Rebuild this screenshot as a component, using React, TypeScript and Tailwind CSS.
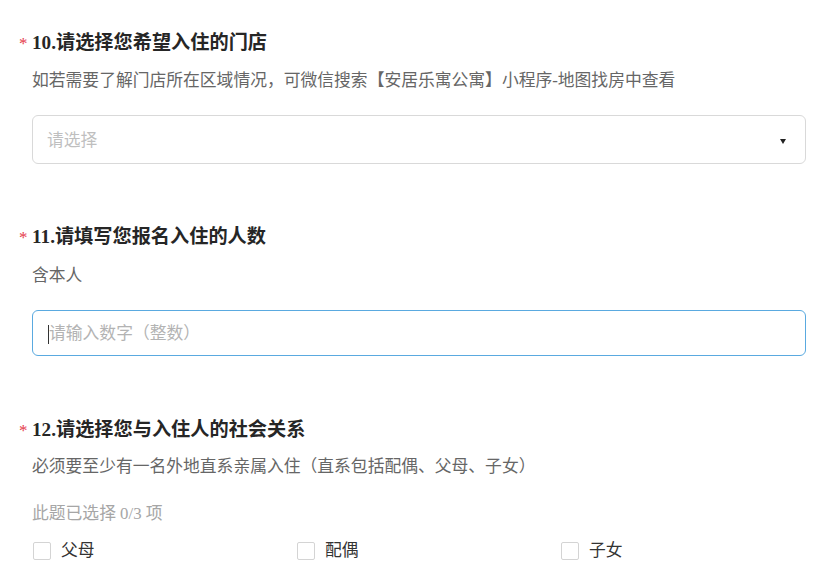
const FONT = { fontFamily: '"Liberation Serif", "Noto Sans CJK SC", serif' };

function Title({ text }: { text: string }) {
  return (
    <div className="flex items-center h-[26px] -ml-[13px]">
      <span className="w-[13px] text-[#e5394a] text-[17px] leading-none">*</span>
      <span className="text-[19.2px] font-bold text-[#262626] leading-[26px]">{text}</span>
    </div>
  );
}

function Desc({ text }: { text: string }) {
  return <p className="text-[16.8px] leading-[24px] text-[#666666]">{text}</p>;
}

function Check({ label }: { label: string }) {
  return (
    <label className="flex items-center shrink-0 w-[264px] h-[20px] pl-px">
      <span className="w-[18px] h-[18px] border border-[#d4d4d4] rounded-[2px] bg-white" />
      <span className="ml-[10px] text-[16.8px] text-[#333333] leading-[20px]">{label}</span>
    </label>
  );
}

export default function App() {
  return (
    <div className="w-[821px] h-[585px] bg-white overflow-hidden pl-[32px] pr-[15px] pt-[30px]" style={FONT}>
      {/* 10 */}
      <Title text="10.请选择您希望入住的门店" />
      <div className="mt-[13px]">
        <Desc text="如若需要了解门店所在区域情况，可微信搜索【安居乐寓公寓】小程序-地图找房中查看" />
      </div>
      <div className="mt-[22px] h-[49px] border border-[#d9d9d9] rounded-[6px] flex items-center justify-between pl-[14px] pr-[19px] pt-[3px]">
        <span className="text-[16.8px] text-[#bfbfbf]">请选择</span>
        <span className="w-0 h-0 border-l-[3.5px] border-r-[3.5px] border-t-[5px] border-l-transparent border-r-transparent border-t-[#222]" />
      </div>

      {/* 11 */}
      <div className="mt-[60px]">
        <Title text="11.请填写您报名入住的人数" />
      </div>
      <div className="mt-[14px]">
        <Desc text="含本人" />
      </div>
      <div className="mt-[22px] h-[46px] border border-[#5aaae0] rounded-[6px] flex items-center pl-[15px] pt-[2px]">
        <span className="w-px h-[19px] bg-[#333]" />
        <span className="text-[16.8px] text-[#b3b3b3]">请输入数字（整数）</span>
      </div>

      {/* 12 */}
      <div className="mt-[61px]">
        <Title text="12.请选择您与入住人的社会关系" />
      </div>
      <div className="mt-[12px]">
        <Desc text="必须要至少有一名外地直系亲属入住（直系包括配偶、父母、子女）" />
      </div>
      <p className="mt-[25px] text-[16.8px] leading-[20px] text-[#a6a6a6]">此题已选择 0/3 项</p>
      <div className="mt-[17px] flex">
        <Check label="父母" />
        <Check label="配偶" />
        <Check label="子女" />
      </div>
    </div>
  );
}
